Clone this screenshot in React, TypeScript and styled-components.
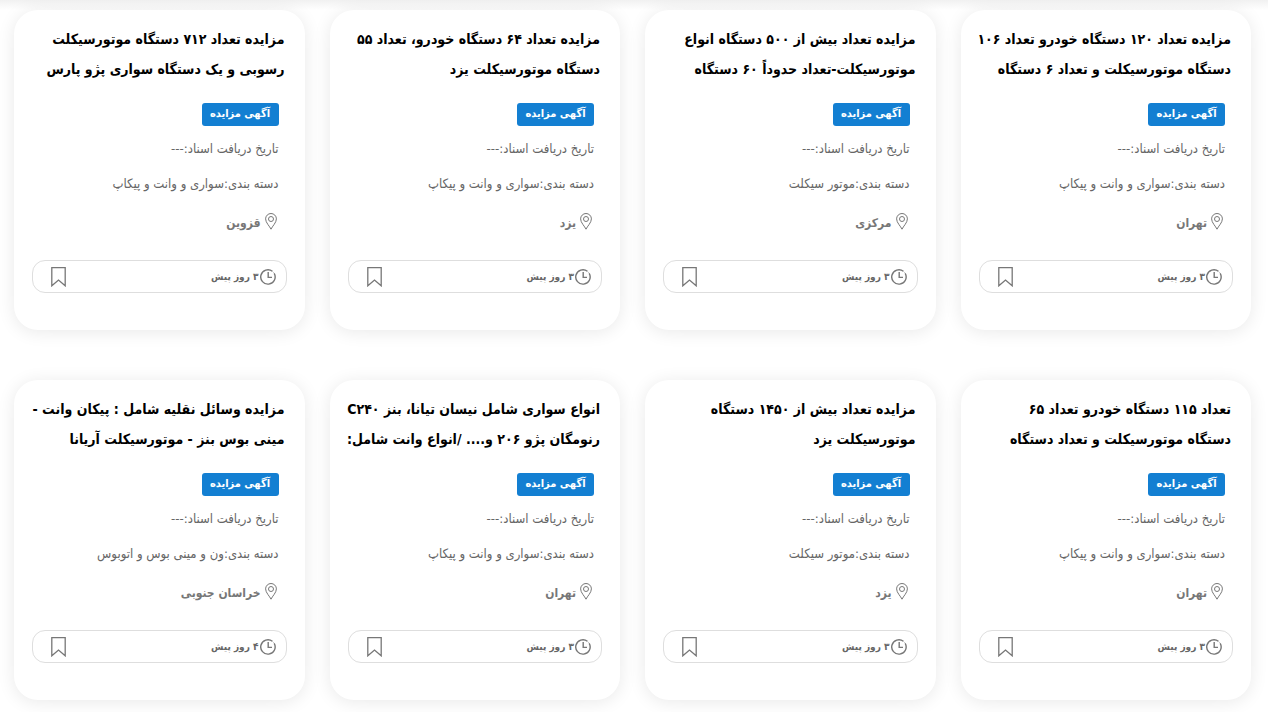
import React from "react";
import styled, { createGlobalStyle } from "styled-components";

const GlobalStyle = createGlobalStyle`
  * { box-sizing: border-box; }
  body {
    margin: 0;
    background: #fff;
    color: #000;
    font-family: "DejaVu Sans Condensed", "DejaVu Sans", sans-serif;
  }
`;

const Page = styled.main`
  direction: rtl;
  padding: 10px 17px 12px 14px;
  background: linear-gradient(#f1f1f1, #fff 10px);
`;

const Grid = styled.div`
  display: grid;
  grid-template-columns: repeat(4, minmax(0, 1fr));
  gap: 50px 25px;
`;

const Card = styled.article`
  display: flex;
  flex-direction: column;
  align-items: stretch;
  padding: 14px 18px 37px;
  border-radius: 24px;
  background: #fff;
  box-shadow: 0 2px 18px rgba(0, 0, 0, 0.09);
`;

const Title = styled.h2`
  margin: 0 2px 19px;
  font-size: 14px;
  font-weight: 700;
  line-height: 30px;
`;

const TitleLink = styled.a`
  color: #000;
  text-decoration: none;
`;

const TitleLine = styled.span`
  display: block;
  white-space: nowrap;
`;

const Details = styled.div`
  display: flex;
  flex-direction: column;
  align-items: flex-start;
  padding: 0 8px;
`;

const Badge = styled.span`
  width: 77px;
  height: 23px;
  margin-bottom: 11px;
  border-radius: 3px;
  background: #137fd2;
  color: #fff;
  font-size: 11px;
  font-weight: 700;
  line-height: 22px;
  text-align: center;
  white-space: nowrap;
`;

const Info = styled.p`
  margin: 0 0 11px;
  color: #666;
  font-size: 13px;
  line-height: 24px;
  white-space: nowrap;
`;

const Place = styled.p`
  display: flex;
  align-items: flex-start;
  gap: 4px;
  margin: 4px 2px 25px;
  color: #777;
  font-size: 12px;
  font-weight: 700;
  line-height: 24px;

  svg {
    margin-top: 2px;
  }
`;

const Footer = styled.footer`
  display: flex;
  align-items: center;
  justify-content: space-between;
  height: 33px;
  padding: 0 10px 0 18px;
  border: 1px solid #dedede;
  border-radius: 13px;
`;

const Age = styled.span`
  display: flex;
  align-items: center;
  gap: 1px;
  color: #666;
  font-size: 10px;
  font-weight: 700;
`;

const SaveButton = styled.button`
  display: flex;
  padding: 0;
  border: 0;
  background: none;
  cursor: pointer;
`;

const PinIcon = () => (
  <svg width="12" height="17" viewBox="0 0 12 17" fill="none" stroke="#777" aria-hidden="true">
    <path d="M6 16.2C4.7 13.2.6 9.7.6 5.9a5.4 5.4 0 0 1 10.8 0C11.4 9.7 7.3 13.2 6 16.2Z" />
    <circle cx="6" cy="6" r="2.5" />
  </svg>
);

const ClockIcon = () => (
  <svg width="16" height="16" viewBox="0 0 16 16" fill="none" stroke="#777" strokeWidth="1.4" aria-hidden="true">
    <path d="M12.4 2.3A7.2 7.2 0 1 0 14.2 4.4" />
    <path d="M12.4 2.3A7.2 7.2 0 0 1 14.2 4.4" strokeWidth="0.4" />
    <path d="M8.2 3V8.4H12" />
  </svg>
);

const BookmarkIcon = () => (
  <svg width="15" height="20" viewBox="0 0 15 20" fill="none" stroke="#777" strokeWidth="1.3" aria-hidden="true">
    <path d="M.8.7H14.2V18.8L7.5 13 .8 18.8Z" />
  </svg>
);

type Auction = { title: string[]; category: string; place: string; age: string };

const auctions: Auction[] = [
  { title: ["مزایده تعداد ۱۲۰ دستگاه خودرو تعداد ۱۰۶", "دستگاه موتورسیکلت و تعداد ۶ دستگاه"], category: "سواری و وانت و پیکاپ", place: "تهران", age: "۳ روز پیش" },
  { title: ["مزایده تعداد بیش از ۵۰۰ دستگاه انواع", "موتورسیکلت-تعداد حدوداً ۶۰ دستگاه"], category: "موتور سیکلت", place: "مرکزی", age: "۳ روز پیش" },
  { title: ["مزایده تعداد ۶۴ دستگاه خودرو، تعداد ۵۵", "دستگاه موتورسیکلت یزد"], category: "سواری و وانت و پیکاپ", place: "یزد", age: "۳ روز پیش" },
  { title: ["مزایده تعداد ۷۱۲ دستگاه موتورسیکلت", "رسوبی و یک دستگاه سواری پژو پارس"], category: "سواری و وانت و پیکاپ", place: "قزوین", age: "۳ روز پیش" },
  { title: ["تعداد ۱۱۵ دستگاه خودرو تعداد ۶۵", "دستگاه موتورسیکلت و تعداد دستگاه"], category: "سواری و وانت و پیکاپ", place: "تهران", age: "۳ روز پیش" },
  { title: ["مزایده تعداد بیش از ۱۴۵۰ دستگاه", "موتورسیکلت یزد"], category: "موتور سیکلت", place: "یزد", age: "۳ روز پیش" },
  { title: ["انواع سواری شامل نیسان تیانا، بنز C۲۴۰", "رنومگان پژو ۲۰۶ و.... /انواع وانت شامل:"], category: "سواری و وانت و پیکاپ", place: "تهران", age: "۳ روز پیش" },
  { title: ["مزایده وسائل نقلیه شامل : پیکان وانت -", "مینی بوس بنز - موتورسیکلت آریانا"], category: "ون و مینی بوس و اتوبوس", place: "خراسان جنوبی", age: "۴ روز پیش" },
];

const AuctionCard = ({ title, category, place, age }: Auction) => (
  <Card>
    <Title>
      <TitleLink href="#">
        {title.map((line) => (
          <TitleLine key={line}>{line}</TitleLine>
        ))}
      </TitleLink>
    </Title>
    <Details>
      <Badge>آگهی مزایده</Badge>
      <Info>تاریخ دریافت اسناد:---</Info>
      <Info>دسته بندی:{category}</Info>
      <Place>
        <PinIcon />
        {place}
      </Place>
    </Details>
    <Footer>
      <Age>
        <ClockIcon />
        {age}
      </Age>
      <SaveButton type="button" aria-label="نشان کردن">
        <BookmarkIcon />
      </SaveButton>
    </Footer>
  </Card>
);

export default function App() {
  return (
    <>
      <GlobalStyle />
      <Page>
        <Grid>
          {auctions.map((auction, index) => (
            <AuctionCard key={index} {...auction} />
          ))}
        </Grid>
      </Page>
    </>
  );
}
